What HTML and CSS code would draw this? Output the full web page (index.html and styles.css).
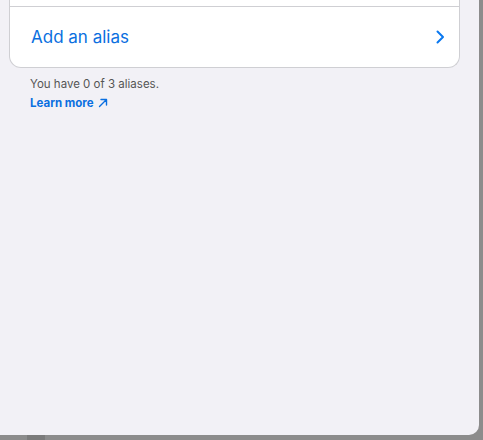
FILE: index.html
```html
<!DOCTYPE html>
<html lang="en">
<head>
    <meta charset="UTF-8">
    <meta name="viewport" content="width=device-width, initial-scale=1.0">
    <title>Aliases</title>
    <link rel="stylesheet" href="styles.css">
</head>
<body>

    <div class="sheet">
        <!-- Alias list card -->
        <div class="card">
            <div class="card-row card-row-top"></div>
            <div class="card-row">
                <span class="row-label">Add an alias</span>
                <svg class="chevron" width="9" height="14" viewBox="0 0 9 14">
                    <path d="M1.5 1.5 L7 7 L1.5 12.5" fill="none" stroke="#0a78f0" stroke-width="2" stroke-linecap="round" stroke-linejoin="round"/>
                </svg>
            </div>
        </div>

        <div class="footnote">
            <p class="count">You have 0 of 3 aliases.</p>
            <a class="learn-more" href="#">Learn more
                <svg width="10" height="10" viewBox="0 0 10 10">
                    <path d="M1.5 8.5 L8.5 1.5 M3 1.5 H8.5 V7" fill="none" stroke="#0a6fe0" stroke-width="1.4" stroke-linecap="round" stroke-linejoin="round"/>
                </svg>
            </a>
        </div>
    </div>

    <div class="dock">
        <div class="dock-tab"></div>
    </div>

</body>
</html>
```

FILE: styles.css
```css
body {
    margin: 0;
    padding: 0;
    height: 440px;
    overflow: hidden;
    background: #8c8c8c;
    font-family: 'Inter', 'Liberation Sans', sans-serif;
}

.sheet {
    width: 479px;
    height: 435px;
    background: #f2f1f6;
    border-bottom-right-radius: 10px;
    box-sizing: border-box;
    padding: 0 19px 0 9px;
    overflow: hidden;
}

.card {
    background: white;
    border: 1px solid #cfcfd3;
    border-top: none;
    border-radius: 0 0 12px 12px;
    margin-top: -20px;
}

.card-row {
    display: flex;
    align-items: center;
    justify-content: space-between;
    height: 60px;
    padding: 0 14px 0 21px;
}

.card-row-top {
    height: 26px;
    border-bottom: 1px solid #cfcfd3;
}

.row-label {
    font-size: 17px;
    color: #0a6fe0;
}

.chevron {
    display: block;
}

.footnote {
    padding: 9px 0 0 21px;
}

.count {
    margin: 0;
    font-size: 11.5px;
    color: #555;
}

.learn-more {
    display: inline-flex;
    align-items: center;
    gap: 4px;
    margin-top: 3px;
    font-size: 11.5px;
    font-weight: bold;
    color: #0a6fe0;
    text-decoration: none;
}

.dock {
    height: 5px;
    padding-left: 27px;
}

.dock-tab {
    width: 18px;
    height: 5px;
    background: #7b7b7b;
}
```
